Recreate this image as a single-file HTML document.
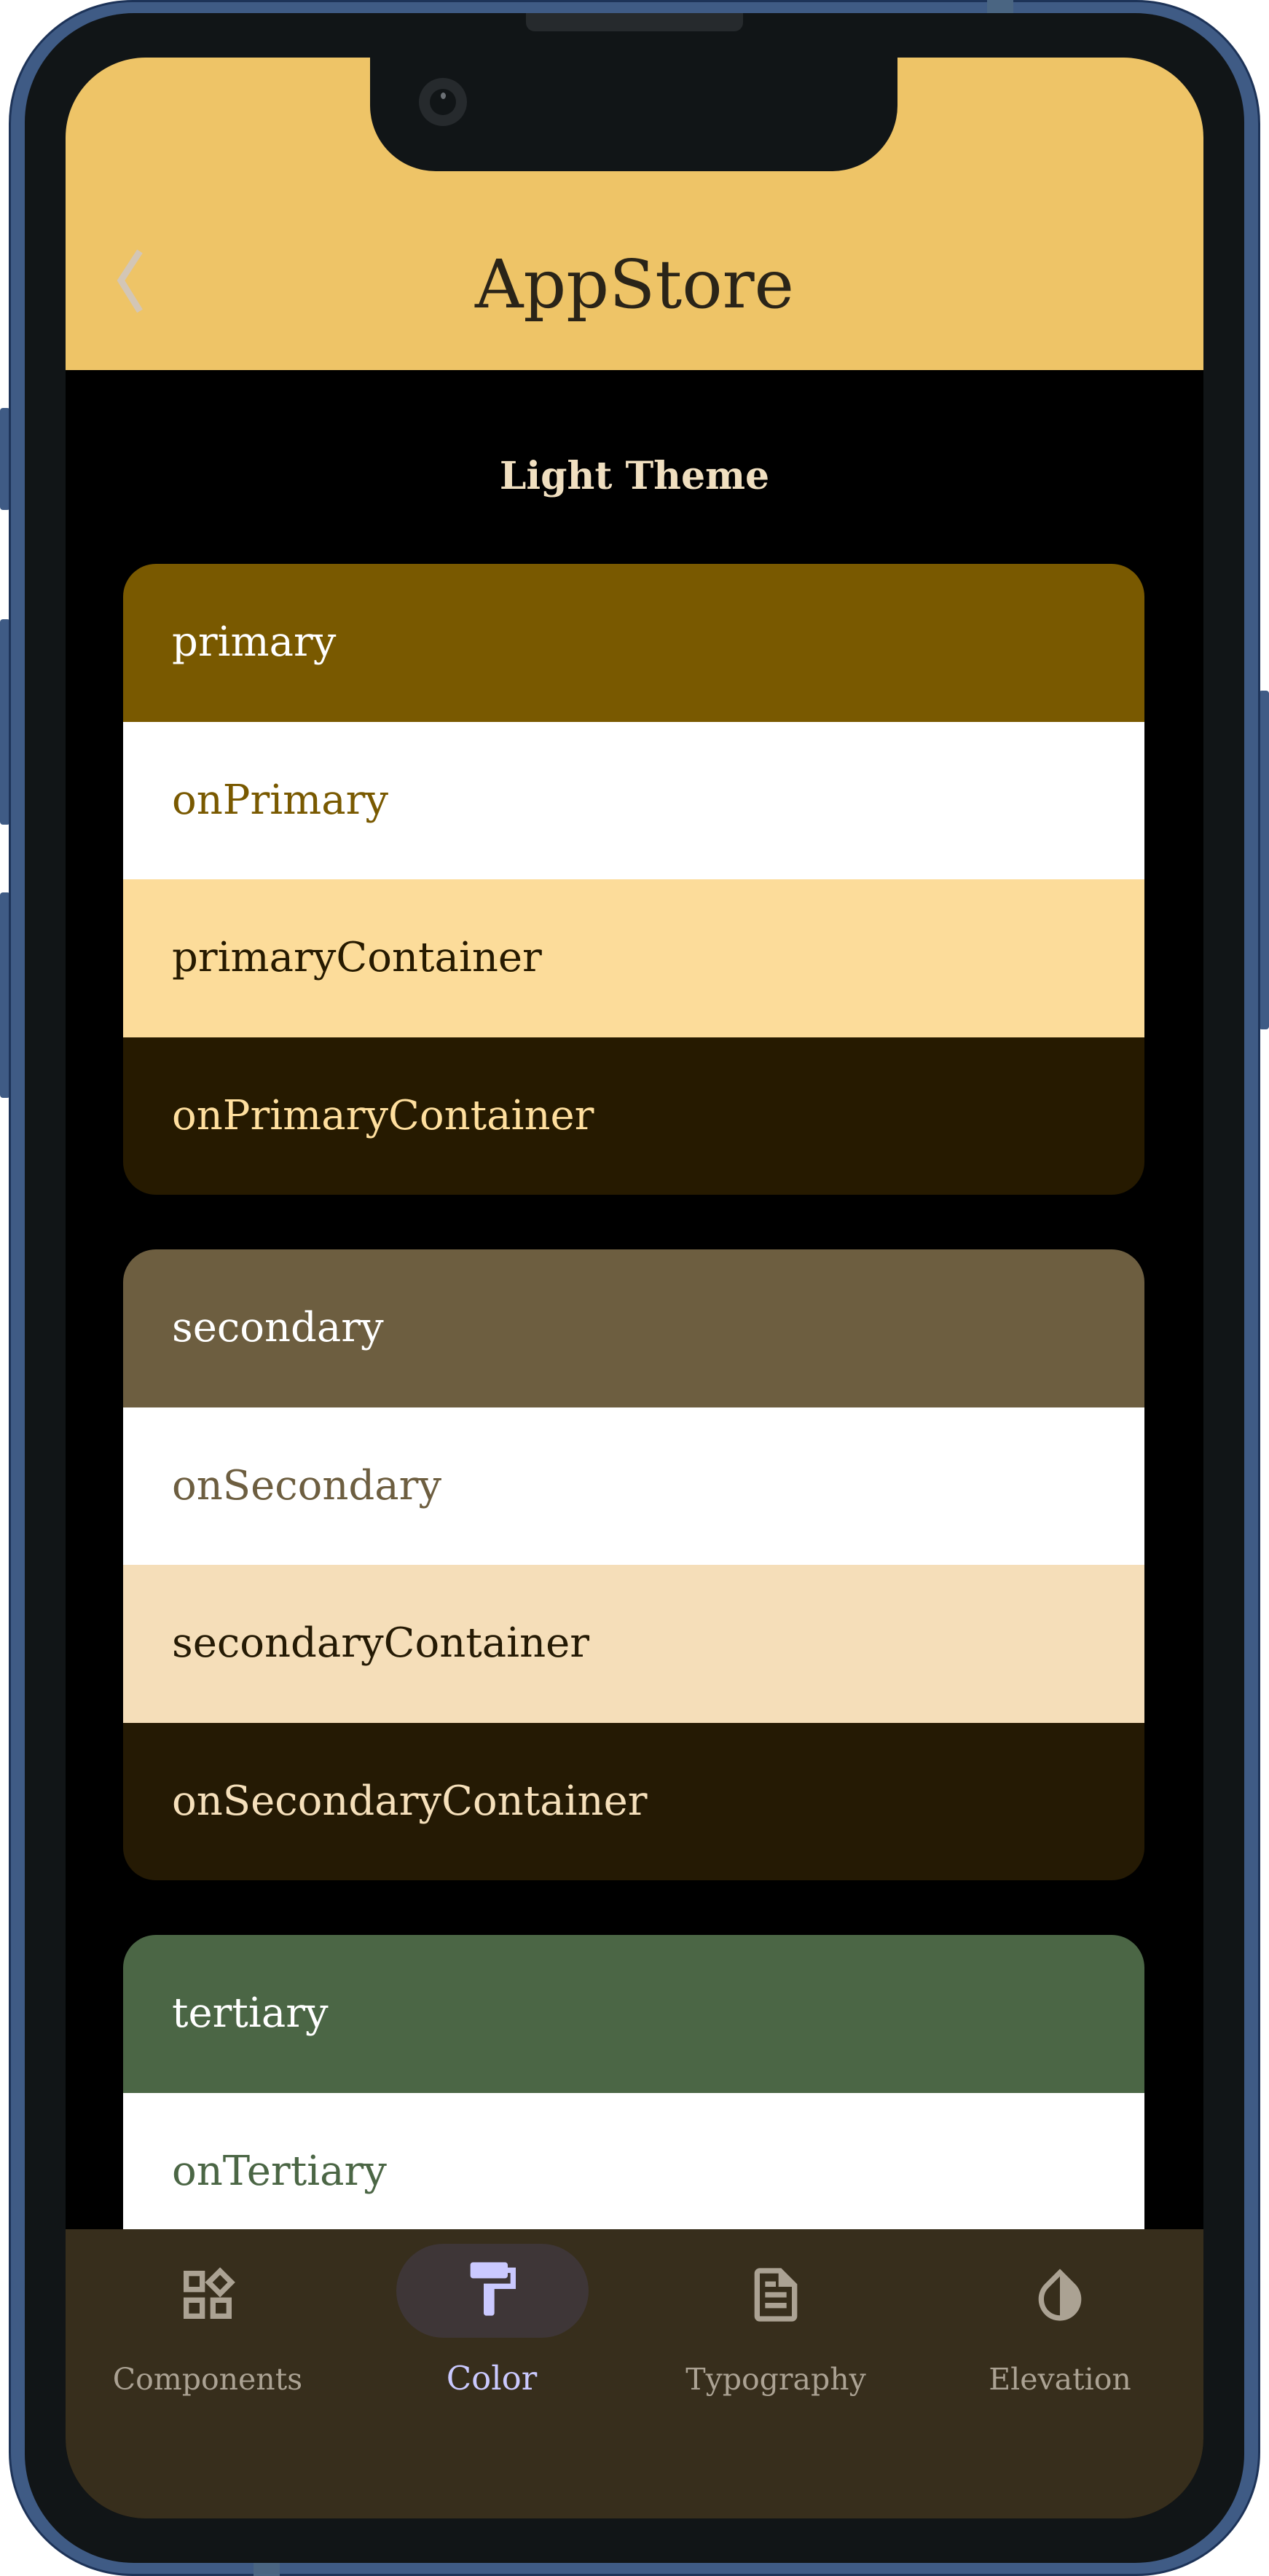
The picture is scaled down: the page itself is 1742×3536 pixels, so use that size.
<!DOCTYPE html>
<html><head><meta charset="utf-8"><style>
*{margin:0;padding:0;box-sizing:border-box}
html,body{width:1742px;height:3536px;background:#fff;overflow:hidden;font-family:"DejaVu Serif","Liberation Serif",serif}
.phone{position:absolute;left:12px;top:0;width:1718px;height:3536px;border-radius:170px;background:#3f5b85;border:3px solid #1d3358}
.bezel{position:absolute;left:34px;top:18px;width:1674px;height:3500px;border-radius:150px;background:#111517}
.btn{position:absolute;background:#3f5b85;border-radius:4px}
.screen{position:absolute;left:90px;top:79px;width:1562px;height:3378px;border-radius:110px;overflow:hidden;background:#000}
.header{position:absolute;left:0;top:0;width:1562px;height:429px;background:#eec467}
.notch{position:absolute;left:418px;top:-10px;width:724px;height:166px;background:#111517;border-radius:0 0 90px 90px}
.title{position:absolute;left:0;width:1562px;top:262px;text-align:center;font-size:92px;color:#2a2418;line-height:100px}
.lt{position:absolute;left:0;width:1562px;top:540px;text-align:center;font-size:52px;font-weight:bold;color:#f0dfc0;line-height:70px}
.card{position:absolute;left:79px;width:1402px;border-radius:45px;overflow:hidden}
.row{height:216.5px;line-height:216.5px;padding-left:67px;font-size:56px}
.nav{position:absolute;left:0;top:2981px;width:1562px;height:397px;background:#372e1c}
.item{position:absolute;top:0;width:390px;text-align:center}
.lbl{position:absolute;top:182px;width:390px;text-align:center;font-size:41px;color:#aba293}
.pill{position:absolute;left:454px;top:20px;width:264px;height:129px;border-radius:65px;background:#3e3637}
</style></head><body>
<div class="btn" style="left:0;top:560px;width:14px;height:140px"></div>
<div class="btn" style="left:0;top:850px;width:14px;height:282px"></div>
<div class="btn" style="left:0;top:1225px;width:14px;height:282px"></div>
<div class="btn" style="left:1728px;top:948px;width:14px;height:465px"></div>
<div class="phone"></div>
<div class="bezel"></div>
<div style="position:absolute;left:722px;top:18px;width:298px;height:25px;background:#262a2d;border-radius:0 0 12px 12px"></div>
<div class="screen">
 <div class="header">
  <svg style="position:absolute;left:66px;top:262px" width="40" height="90" viewBox="0 0 40 90"><path d="M36 4 L10 44 L36 86" stroke="#d3c6b6" stroke-width="9" fill="none"/></svg>
  <div class="title">AppStore</div>
 </div>
 <div class="notch"></div>
 <div style="position:absolute;left:485px;top:28px;width:66px;height:66px;border-radius:50%;background:#262a2d"></div>
 <div style="position:absolute;left:500px;top:43px;width:36px;height:36px;border-radius:50%;background:#111517"></div>
 <div style="position:absolute;left:515px;top:48px;width:7px;height:9px;border-radius:50%;background:#6b7075"></div>
 <div class="lt">Light Theme</div>
 <div class="card" style="top:695px">
  <div class="row" style="background:#795900;color:#fff">primary</div>
  <div class="row" style="background:#fff;color:#795900">onPrimary</div>
  <div class="row" style="background:#fcdc9a;color:#261a00">primaryContainer</div>
  <div class="row" style="background:#261a00;color:#ffdf9e">onPrimaryContainer</div>
 </div>
 <div class="card" style="top:1636px">
  <div class="row" style="background:#6d5e40;color:#fff">secondary</div>
  <div class="row" style="background:#fff;color:#6d5e40">onSecondary</div>
  <div class="row" style="background:#f5deb9;color:#251a04">secondaryContainer</div>
  <div class="row" style="background:#251a04;color:#f6e0bb">onSecondaryContainer</div>
 </div>
 <div class="card" style="top:2577px">
  <div class="row" style="background:#4b6645;color:#fff">tertiary</div>
  <div class="row" style="background:#fff;color:#4b6645">onTertiary</div>
  <div class="row" style="background:#fff;color:#4b6645"></div>
 </div>
 <div class="nav">
  <div class="pill"></div>
  <div class="item" style="left:0">
   <svg style="position:absolute;left:151px;top:46px" width="88" height="88" viewBox="0 0 24 24"><path fill="#aba293" d="M16.66 4.52l2.83 2.83-2.83 2.83-2.83-2.83 2.83-2.83M9 5v4H5V5h4m10 10v4h-4v-4h4M9 15v4H5v-4h4m7.66-13.31L11 7.34 16.66 13l5.66-5.66-5.66-5.65zM11 3H3v8h8V3zm10 10h-8v8h8v-8zm-10 0H3v8h8v-8z"/></svg>
   <div class="lbl" style="left:0">Components</div>
  </div>
  <div class="item" style="left:390px">
   <svg style="position:absolute;left:151px;top:38px" width="88" height="88" viewBox="0 0 24 24"><path fill="#cac9ff" d="M18 4V3c0-.55-.45-1-1-1H5c-.55 0-1 .45-1 1v4c0 .55.45 1 1 1h12c.55 0 1-.45 1-1V6h1v4H9v11c0 .55.45 1 1 1h2c.55 0 1-.45 1-1v-9h8V4h-3z"/></svg>
   <div class="lbl" style="left:0;color:#cac9ff;font-size:45px;top:178px">Color</div>
  </div>
  <div class="item" style="left:780px">
   <svg style="position:absolute;left:151px;top:46px" width="88" height="88" viewBox="0 0 24 24"><path fill="#aba293" d="M14 2H6c-1.1 0-2 .9-2 2v16c0 1.1.9 2 2 2h12c1.1 0 2-.9 2-2V8l-6-6zm4 18H6V4h7v5h5v11zM8 15h8v2H8zm0-4h8v2H8zm0-4h4v2H8z"/></svg>
   <div class="lbl" style="left:0">Typography</div>
  </div>
  <div class="item" style="left:1170px">
   <svg style="position:absolute;left:151px;top:46px" width="88" height="88" viewBox="0 0 24 24"><path fill="#aba293" d="M12 2.3L6.3 8C4.8 9.5 4 11.5 4 13.6s.8 4.1 2.3 5.7S9.9 21.7 12 21.7s4.1-.8 5.7-2.4S20 15.7 20 13.6 19.2 9.5 17.7 8L12 2.3zM12 19.7c-1.6 0-3.1-.6-4.3-1.8C6.6 16.8 6 15.3 6 13.6s.6-3.1 1.7-4.2L12 5.1v14.6z"/></svg>
   <div class="lbl" style="left:0">Elevation</div>
  </div>
 </div>
</div>
<div style="position:absolute;left:348px;top:3518px;width:36px;height:18px;background:#4a6582"></div>
<div style="position:absolute;left:1355px;top:0;width:36px;height:18px;background:#4a6582"></div>
</body></html>
